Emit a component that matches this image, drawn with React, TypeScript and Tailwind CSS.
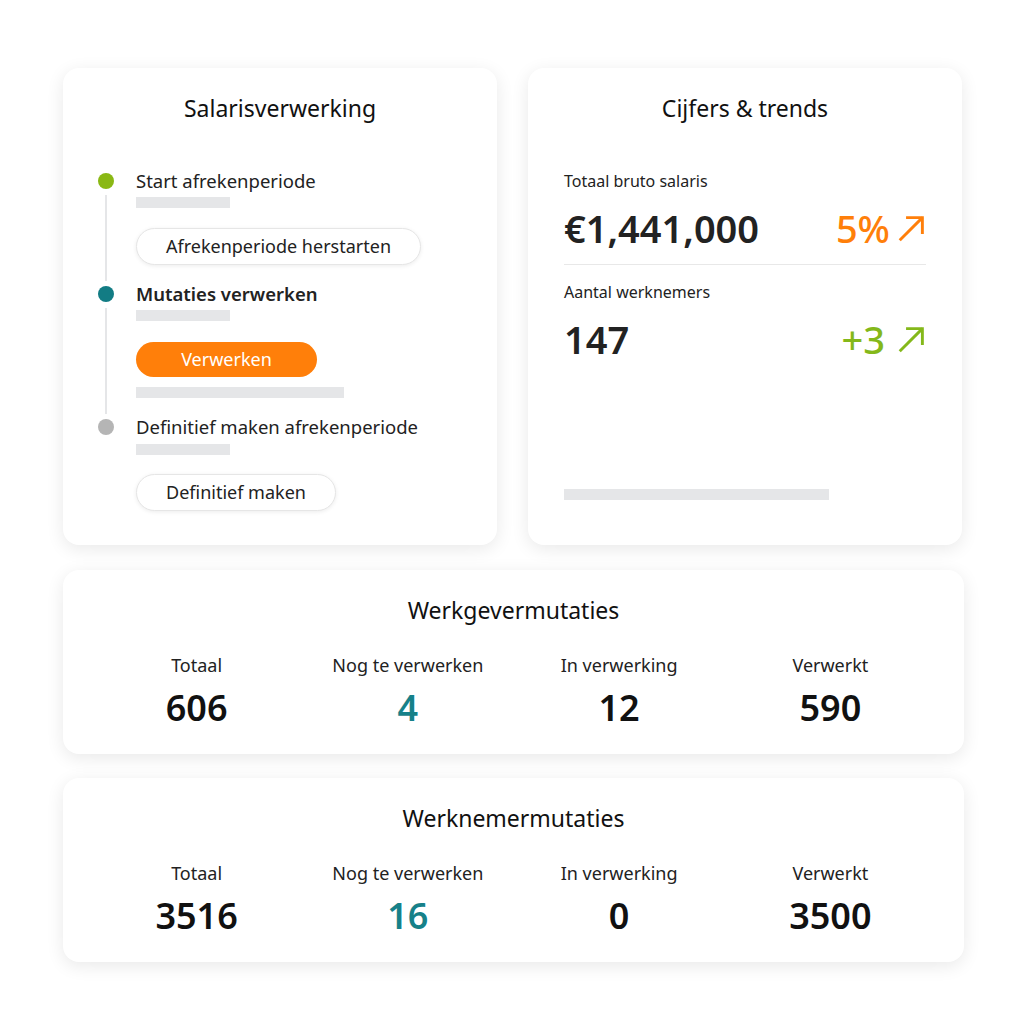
import React from "react"

const font = { fontFamily: '"Noto Sans", "Open Sans", sans-serif' }

function ArrowUpRight({ className }: { className?: string }) {
  return (
    <svg viewBox="0 0 32 32" className={className} fill="none" stroke="currentColor" strokeWidth={3.2} strokeLinecap="butt">
      <path d="M3 29 L28 4" />
      <path d="M10 4 H28 V22" />
    </svg>
  )
}

function Step({
  dot,
  label,
  bold,
  children,
  line,
}: {
  dot: string
  label: string
  bold?: boolean
  children?: React.ReactNode
  line?: boolean
}) {
  return (
    <div className="flex">
      <div className="w-[16px] flex flex-col items-center mr-[22px]">
        <div className={`w-[16px] h-[16px] rounded-full mt-[5px] shrink-0 ${dot}`} />
        {line && <div className="w-[2px] flex-1 bg-[#e5e6e8] mt-[6px]" />}
      </div>
      <div className="flex-1 pb-[16px]">
        <div className={`text-[18.5px] leading-[26px] text-[#222] whitespace-nowrap ${bold ? "font-semibold" : ""}`}>{label}</div>
        {children}
      </div>
    </div>
  )
}

function Bar({ w }: { w: string }) {
  return <div className={`h-[11px] bg-[#e5e6e8] ${w}`} />
}

function OutlineButton({ children, w }: { children: React.ReactNode; w: string }) {
  return (
    <div
      className={`flex items-center justify-center h-[37px] rounded-full border border-[#e6e6e6] bg-white shadow-[0_1px_4px_rgba(0,0,0,0.08)] text-[18px] text-[#222] whitespace-nowrap ${w}`}
    >
      {children}
    </div>
  )
}

function StatCard({ title, stats }: { title: string; stats: { label: string; value: string; teal?: boolean }[] }) {
  return (
    <div className="bg-white rounded-[16px] shadow-[0_4px_18px_rgba(0,0,0,0.09)] pt-[25px] pb-[24px] px-[28px]">
      <h2 className="text-center text-[23px] text-[#111] leading-[30px]">{title}</h2>
      <div className="grid grid-cols-4 mt-[28px]">
        {stats.map((s) => (
          <div key={s.label} className="flex flex-col items-center">
            <div className="text-[18px] text-[#222] leading-[24px]">{s.label}</div>
            <div className={`text-[36px] font-semibold leading-[44px] mt-[9px] ${s.teal ? "text-[#168189]" : "text-[#111]"}`}>
              {s.value}
            </div>
          </div>
        ))}
      </div>
    </div>
  )
}

export default function App() {
  return (
    <main className="w-[1024px] h-[1024px] bg-white pt-[68px] px-[63px]" style={font}>
      <div className="flex gap-[31px] w-[899px]">
        {/* Salarisverwerking */}
        <section className="w-[434px] h-[477px] bg-white rounded-[16px] shadow-[0_4px_18px_rgba(0,0,0,0.09)] pt-[25px] pl-[35px] pr-[20px]">
          <h2 className="text-center text-[23px] text-[#111] leading-[30px] -ml-[15px]">Salarisverwerking</h2>
          <div className="mt-[45px]">
            <Step dot="bg-[#8ab814]" label="Start afrekenperiode" line>
              <div className="mt-[3px]"><Bar w="w-[94px]" /></div>
              <div className="mt-[20px]"><OutlineButton w="w-[285px]">Afrekenperiode herstarten</OutlineButton></div>
            </Step>
            <Step dot="bg-[#127c84]" label="Mutaties verwerken" bold line>
              <div className="mt-[3px]"><Bar w="w-[94px]" /></div>
              <div className="mt-[21px] flex items-center justify-center w-[181px] h-[35px] rounded-full bg-[#ff7f0a] text-white text-[18px]">
                Verwerken
              </div>
              <div className="mt-[10px]"><Bar w="w-[208px]" /></div>
            </Step>
            <Step dot="bg-[#b5b5b5]" label="Definitief maken afrekenperiode">
              <div className="mt-[4px]"><Bar w="w-[94px]" /></div>
              <div className="mt-[19px]"><OutlineButton w="w-[200px]">Definitief maken</OutlineButton></div>
            </Step>
          </div>
        </section>

        {/* Cijfers & trends */}
        <section className="w-[434px] h-[477px] bg-white rounded-[16px] shadow-[0_4px_18px_rgba(0,0,0,0.09)] pt-[25px] px-[36px] flex flex-col">
          <h2 className="text-center text-[23px] text-[#111] leading-[30px]">Cijfers &amp; trends</h2>
          <div className="mt-[46px] text-[16px] text-[#222] leading-[24px]">Totaal bruto salaris</div>
          <div className="flex items-center justify-between mt-[13px] pb-[14px] border-b border-[#e8e8e8]">
            <span className="text-[38px] font-semibold text-[#222] leading-[44px]">€1,441,000</span>
            <span className="flex items-center gap-[7px] text-[#ff7f0a]">
              <span className="text-[38px] font-medium leading-[44px]">5%</span>
              <ArrowUpRight className="w-[29px] h-[29px]" />
            </span>
          </div>
          <div className="mt-[15px] text-[16px] text-[#222] leading-[24px]">Aantal werknemers</div>
          <div className="flex items-center justify-between mt-[13px]">
            <span className="text-[38px] font-semibold text-[#222] leading-[44px]">147</span>
            <span className="flex items-center gap-[12px] text-[#84b81a]">
              <span className="text-[38px] font-medium leading-[44px]">+3</span>
              <ArrowUpRight className="w-[29px] h-[29px]" />
            </span>
          </div>
          <div className="mt-auto mb-[45px]"><Bar w="w-[265px]" /></div>
        </section>
      </div>

      <div className="w-[901px] mt-[25px] flex flex-col gap-[24px]">
        <StatCard
          title="Werkgevermutaties"
          stats={[
            { label: "Totaal", value: "606" },
            { label: "Nog te verwerken", value: "4", teal: true },
            { label: "In verwerking", value: "12" },
            { label: "Verwerkt", value: "590" },
          ]}
        />
        <StatCard
          title="Werknemermutaties"
          stats={[
            { label: "Totaal", value: "3516" },
            { label: "Nog te verwerken", value: "16", teal: true },
            { label: "In verwerking", value: "0" },
            { label: "Verwerkt", value: "3500" },
          ]}
        />
      </div>
    </main>
  )
}
